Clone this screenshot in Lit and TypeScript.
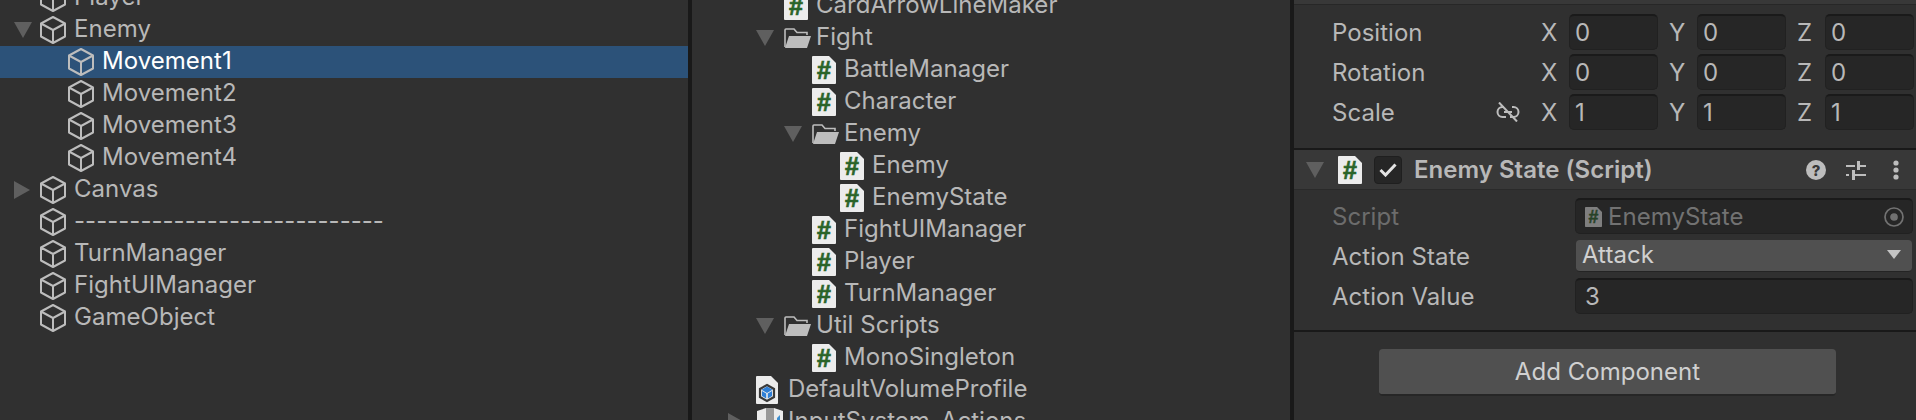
import { LitElement, css, html, svg } from 'lit';
import { customElement } from 'lit/decorators.js';

type Kind = 'cube' | 'script' | 'folder' | 'volume' | 'input';
type Row = { label: string; depth: number; kind: Kind; arrow?: 'down' | 'right'; selected?: boolean };

const hierarchy: Row[] = [
  { label: 'Player', depth: 0, kind: 'cube' },
  { label: 'Enemy', depth: 0, kind: 'cube', arrow: 'down' },
  { label: 'Movement1', depth: 1, kind: 'cube', selected: true },
  { label: 'Movement2', depth: 1, kind: 'cube' },
  { label: 'Movement3', depth: 1, kind: 'cube' },
  { label: 'Movement4', depth: 1, kind: 'cube' },
  { label: 'Canvas', depth: 0, kind: 'cube', arrow: 'right' },
  { label: '----------------------------', depth: 0, kind: 'cube' },
  { label: 'TurnManager', depth: 0, kind: 'cube' },
  { label: 'FightUIManager', depth: 0, kind: 'cube' },
  { label: 'GameObject', depth: 0, kind: 'cube' },
];

const project: Row[] = [
  { label: 'CardArrowLineMaker', depth: 1, kind: 'script' },
  { label: 'Fight', depth: 1, kind: 'folder', arrow: 'down' },
  { label: 'BattleManager', depth: 2, kind: 'script' },
  { label: 'Character', depth: 2, kind: 'script' },
  { label: 'Enemy', depth: 2, kind: 'folder', arrow: 'down' },
  { label: 'Enemy', depth: 3, kind: 'script' },
  { label: 'EnemyState', depth: 3, kind: 'script' },
  { label: 'FightUIManager', depth: 2, kind: 'script' },
  { label: 'Player', depth: 2, kind: 'script' },
  { label: 'TurnManager', depth: 2, kind: 'script' },
  { label: 'Util Scripts', depth: 1, kind: 'folder', arrow: 'down' },
  { label: 'MonoSingleton', depth: 2, kind: 'script' },
  { label: 'DefaultVolumeProfile', depth: 0, kind: 'volume' },
  { label: 'InputSystem_Actions', depth: 0, kind: 'input', arrow: 'right' },
];

const transform = [
  { label: 'Position', values: ['0', '0', '0'] },
  { label: 'Rotation', values: ['0', '0', '0'] },
  { label: 'Scale', values: ['1', '1', '1'], link: true },
];

function cubeIcon() {
  return html`<svg width="26" height="28" viewBox="0 0 26 28" fill="none" stroke="#bdbdbd" stroke-width="2" stroke-linejoin="round">
    <path d="M13 1 L25 7.5 V20.5 L13 27 L1 20.5 V7.5 Z M1 7.5 L13 14 L25 7.5 M13 14 V27" />
  </svg>`;
}

function scriptIcon(w = 24, h = 28) {
  return html`<svg width=${w} height=${h} viewBox="0 0 24 28">
    <path d="M1 0 H17 L24 7 V27 Q24 28 23 28 H1 Q0 28 0 27 V1 Q0 0 1 0 Z" fill="#ececec" />
    <text x="12" y="23" text-anchor="middle" font-family="Liberation Sans" font-weight="700" font-size="25" fill="#2a6429" stroke="#2a6429" stroke-width="0.7">#</text>
  </svg>`;
}

function folderIcon() {
  return html`<svg width="27" height="20" viewBox="0 0 27 20">
    <path d="M1 19 V2 Q1 1 2 1 H10 L13 4.5 H23 V7" fill="none" stroke="#bdbdbd" stroke-width="1.6" />
    <path d="M5 8 H27 L23 20 H1 Z" fill="#bdbdbd" />
  </svg>`;
}

function volumeIcon() {
  return html`<svg width="22" height="28" viewBox="0 0 22 28">
    <path d="M1 0 H15 L22 7 V27 Q22 28 21 28 H1 Q0 28 0 27 V1 Q0 0 1 0 Z" fill="#ececec" />
    <path d="M11 9 L18 13 V21 L11 25 L4 21 V13 Z" fill="none" stroke="#3a3a3a" stroke-width="2.2" />
    <path d="M11 10.5 L16.5 13.7 L11 17 L5.5 13.7 Z" fill="#2f7fd6" />
    <path d="M6 15 L10.2 17.6 V22.5 L6 20 Z M16 15 L11.8 17.6 V22.5 L16 20 Z" fill="#2f7fd6" />
  </svg>`;
}

function inputIcon() {
  return html`<svg width="28" height="28" viewBox="0 0 28 28">
    <path d="M1 3 L10 0 V28 H1 Z M18 0 L27 3 V28 H18 Z" fill="#ececec" />
    <path d="M10 0 H18 V28 H10 Z" fill="#9a9a9a" />
    <path d="M21 10 L24 7 V14 H21 Z" fill="#3f8fd0" />
  </svg>`;
}

function arrowIcon(dir: 'down' | 'right') {
  return dir === 'down'
    ? html`<svg width="18" height="16" viewBox="0 0 18 16"><path d="M0 0 H18 L9 16 Z" fill="#5f5f5f" /></svg>`
    : html`<svg width="16" height="18" viewBox="0 0 16 18"><path d="M0 0 L16 9 L0 18 Z" fill="#5f5f5f" /></svg>`;
}

const kindIcons = { cube: cubeIcon, script: () => scriptIcon(), folder: folderIcon, volume: volumeIcon, input: inputIcon };

const linkIcon = svg`<svg class="link" width="24" height="20" viewBox="0 0 24 20" fill="none" stroke="#bdbdbd" stroke-width="2">
  <path d="M8 5 H6.5 A5 5 0 0 0 6.5 15 H10 M16 5 H17.5 A5 5 0 0 1 17.5 15 H14" />
  <path d="M8 10 H16" />
  <path d="M3 0.5 L21 19.5" />
</svg>`;

@customElement('app-root')
export class AppRoot extends LitElement {
  static styles = css`
    :host {
      display: block;
      height: 420px;
      overflow: hidden;
      font-family: Inter, 'Noto Sans', sans-serif;
      font-size: 24px;
      letter-spacing: 0.03px;
      color: #b8b8b8;
    }
    * { box-sizing: border-box; }
    .layout {
      display: grid;
      grid-template-columns: 688px 598px 622px;
      gap: 4px;
      height: 420px;
      background: #191919;
    }
    .panel { background: #303030; overflow: hidden; min-width: 0; }
    .tree { margin-top: -18px; }
    .tree.project { margin-top: -10px; }
    .row { display: flex; align-items: center; height: 32px; white-space: nowrap; }
    .row.selected { background: #2c5279; color: #fff; }
    .row span { padding-bottom: 3px; margin-left: -1px; }
    .arrow { width: 28px; flex: none; display: flex; align-items: center; padding-left: 2px; }
    .project .arrow { padding-left: 0; }
    .icon { flex: none; display: flex; align-items: center; width: 35px; }
    .project .icon { width: 33px; }

    .strip { height: 5px; background: #383838; border-bottom: 1px solid #272727; }
    .transform { display: flex; flex-direction: column; gap: 4px; padding: 9px 2px 18px 38px; }
    .t-row { display: flex; align-items: center; height: 36px; }
    .t-label { flex: 1; }
    .link { margin-right: 21px; }
    .cell { display: flex; align-items: center; width: 128px; }
    .cell:last-child { width: 117px; }
    .axis { width: 28px; flex: none; }
    .field {
      height: 36px;
      background: #262626;
      border: 1px solid #212121;
      border-top: 2px solid #1a1a1a;
      border-radius: 5px;
      display: flex;
      align-items: center;
    }
    .cell .field { width: 89px; flex: none; padding-left: 5px; }

    .comp-head {
      display: flex;
      align-items: center;
      height: 42px;
      background: #383838;
      border-top: 2px solid #191919;
      border-bottom: 1px solid #2a2a2a;
      padding-left: 12px;
      font-weight: 600;
    }
    .comp-head .arrow { width: 32px; padding-left: 0; }
    .check {
      width: 28px;
      height: 28px;
      margin-left: 12px;
      background: #262626;
      border: 1px solid #1f1f1f;
      border-radius: 4px;
      display: flex;
      align-items: center;
      justify-content: center;
      flex: none;
    }
    .title { margin-left: 12px; flex: 1; }
    .head-tools { display: flex; align-items: center; gap: 20px; padding-right: 17px; }

    .props { display: flex; flex-direction: column; padding: 8px 3px 16px 38px; border-bottom: 2px solid #191919; }
    .p-row { display: flex; align-items: center; height: 36px; }
    .p-row + .p-row { margin-top: 6px; }
    .p-row.action { height: 32px; }
    .p-row.value { height: 36px; margin-top: 6px; }
    .p-label { width: 243px; flex: none; }
    .dim { color: #6c6c6c; }
    .field.wide { flex: 1; padding-left: 9px; }
    .field.script { gap: 6px; color: #727272; padding-right: 8px; }
    .field.script span { flex: 1; }
    .faded { opacity: 0.45; display: flex; }
    .dropdown {
      flex: 1;
      height: 32px;
      margin: 0 1px;
      background: #505050;
      border-bottom: 1px solid #242424;
      border-radius: 4px;
      display: flex;
      align-items: center;
      justify-content: space-between;
      padding: 0 11px 2px 6px;
      color: #d0d0d0;
    }
    .actions { display: flex; padding: 17px 0 0 85px; }
    .button {
      width: 457px;
      height: 47px;
      background: #505050;
      border-radius: 4px;
      border: 1px solid #262626;
      border-width: 0 0 2px;
      display: flex;
      align-items: center;
      justify-content: center;
      color: #d0d0d0;
    }
  `;

  renderRow(row: Row, base: number) {
    return html`
      <div class="row ${row.selected ? 'selected' : ''}" style="padding-left:${base + row.depth * 28}px">
        <div class="arrow">${row.arrow ? arrowIcon(row.arrow) : null}</div>
        <div class="icon">${kindIcons[row.kind]()}</div>
        <span>${row.label}</span>
      </div>
    `;
  }

  render() {
    return html`
      <div class="layout">
        <section class="panel">
          <div class="tree">${hierarchy.map((r) => this.renderRow(r, 12))}</div>
        </section>
        <section class="panel">
          <div class="tree project">${project.map((r) => this.renderRow(r, 36))}</div>
        </section>
        <section class="panel">
          <div class="strip"></div>
          <div class="transform">
            ${transform.map(
              (t) => html`
                <div class="t-row">
                  <div class="t-label">${t.label}</div>
                  ${t.link ? linkIcon : null}
                  ${['X', 'Y', 'Z'].map(
                    (axis, i) => html`
                      <div class="cell">
                        <span class="axis">${axis}</span>
                        <div class="field">${t.values[i]}</div>
                      </div>
                    `
                  )}
                </div>
              `
            )}
          </div>
          <div class="comp-head">
            <div class="arrow">${arrowIcon('down')}</div>
            ${scriptIcon()}
            <div class="check">
              <svg width="18" height="14" viewBox="0 0 18 14" fill="none" stroke="#e4e4e4" stroke-width="3"><path d="M1.5 7 L6.5 12 L16.5 1.5" /></svg>
            </div>
            <div class="title">Enemy State (Script)</div>
            <div class="head-tools">
              <svg width="20" height="20" viewBox="0 0 20 20">
                <circle cx="10" cy="10" r="10" fill="#bdbdbd" />
                <text x="10" y="15.5" text-anchor="middle" font-family="Inter" font-weight="800" font-size="15" fill="#383838">?</text>
              </svg>
              <svg width="20" height="20" viewBox="0 0 20 20" fill="#bdbdbd">
                <path d="M0 5 H9 V7 H0 Z M11 1 H14 V10 H11 Z M14 5 H20 V7 H14 Z M0 14 H3 V16 H0 Z M6 10 H9 V20 H6 Z M9 14 H20 V16 H9 Z" />
              </svg>
              <svg width="6" height="20" viewBox="0 0 6 20" fill="#bdbdbd" style="margin-left:7px">
                <circle cx="3" cy="3" r="2.6" /><circle cx="3" cy="10" r="2.6" /><circle cx="3" cy="17" r="2.6" />
              </svg>
            </div>
          </div>
          <div class="props">
            <div class="p-row">
              <div class="p-label dim">Script</div>
              <div class="field wide script">
                <div class="faded">${scriptIcon(17, 20)}</div>
                <span>EnemyState</span>
                <svg width="20" height="20" viewBox="0 0 20 20" fill="none" stroke="#727272" stroke-width="1.7">
                  <circle cx="10" cy="10" r="9" /><circle cx="10" cy="10" r="3" fill="#727272" />
                </svg>
              </div>
            </div>
            <div class="p-row action">
              <div class="p-label">Action State</div>
              <div class="dropdown">
                <span>Attack</span>
                <svg width="14" height="9" viewBox="0 0 14 9"><path d="M0 0 H14 L7 9 Z" fill="#c4c4c4" /></svg>
              </div>
            </div>
            <div class="p-row value">
              <div class="p-label">Action Value</div>
              <div class="field wide">3</div>
            </div>
          </div>
          <div class="actions"><div class="button">Add Component</div></div>
        </section>
      </div>
    `;
  }
}
